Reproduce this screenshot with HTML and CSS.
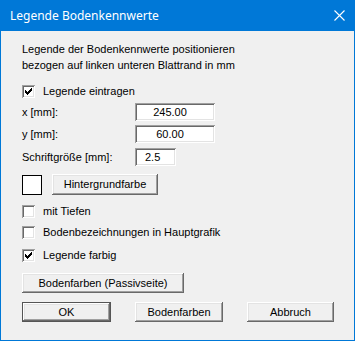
FILE: index.html
```html
<!DOCTYPE html>
<html>
<head>
<meta charset="utf-8">
<link rel="stylesheet" href="styles.css">
</head>
<body>
<div class="window">
  <div class="titlebar">
    <span class="title">Legende Bodenkennwerte</span>
    <svg class="close" width="11" height="11" viewBox="0 0 11 11"><path d="M0.5 0.5L10.5 10.5M10.5 0.5L0.5 10.5" stroke="#fff" stroke-width="1.1" fill="none"/></svg>
  </div>
  <div class="body">
    <p class="intro">Legende der Bodenkennwerte positionieren<br>bezogen auf linken unteren Blattrand in mm</p>

    <div class="check r-first"><span class="box"><svg width="13" height="13" viewBox="0 0 13 13" shape-rendering="crispEdges"><path d="M9 3h1v1h-1zM8 4h2v1h-2zM3 5h1v1h-1zM7 5h3v1h-3zM3 6h2v1h-2zM6 6h3v1h-3zM3 7h5v1h-5zM4 8h3v1h-3zM5 9h1v1h-1z" fill="#000"/></svg></span><span>Legende eintragen</span></div>

    <div class="field f-x"><span class="lbl">x [mm]:</span><span class="input wide">245.00</span></div>
    <div class="field f-y"><span class="lbl">y [mm]:</span><span class="input wide">60.00</span></div>
    <div class="field f-s"><span class="lbl">Schriftgröße [mm]:</span><span class="input narrow">2.5</span></div>

    <div class="color-row">
      <span class="swatch"></span>
      <span class="btn btn-bg">Hintergrundfarbe</span>
    </div>

    <div class="check r-tiefen"><span class="box"></span><span>mit Tiefen</span></div>
    <div class="check r-boden"><span class="box"></span><span>Bodenbezeichnungen in Hauptgrafik</span></div>
    <div class="check r-farbig"><span class="box"><svg width="13" height="13" viewBox="0 0 13 13" shape-rendering="crispEdges"><path d="M9 3h1v1h-1zM8 4h2v1h-2zM3 5h1v1h-1zM7 5h3v1h-3zM3 6h2v1h-2zM6 6h3v1h-3zM3 7h5v1h-5zM4 8h3v1h-3zM5 9h1v1h-1z" fill="#000"/></svg></span><span>Legende farbig</span></div>

    <div class="passiv-row"><span class="btn btn-passiv">Bodenfarben (Passivseite)</span></div>

    <div class="actions">
      <span class="btn btn-ok">OK</span>
      <span class="btn btn-farben">Bodenfarben</span>
      <span class="btn btn-abbruch">Abbruch</span>
    </div>
  </div>
</div>
</body>
</html>
```
FILE: styles.css
```css
html, body {
  margin: 0;
  padding: 0;
  background: #f0f0f0;
}
.window {
  width: 355px;
  height: 341px;
  display: flex;
  flex-direction: column;
  font-family: "Liberation Sans", Arial, sans-serif;
  font-size: 11px;
  color: #000;
}
.titlebar {
  height: 31px;
  flex: none;
  background: #0078d7;
  display: flex;
  align-items: center;
  justify-content: space-between;
  padding: 0 10px 0 10px;
  box-sizing: border-box;
}
.title {
  font-family: "Noto Sans", "Open Sans", sans-serif;
  font-size: 12px;
  line-height: 31px;
  color: #fff;
}
.close {
  display: block;
  margin-top: -1px;
}
.body {
  flex: 1;
  border: 1px solid #0078d7;
  border-top: none;
  background: #f0f0f0;
  padding-left: 21px;
  display: flex;
  flex-direction: column;
  align-items: flex-start;
}
.intro {
  margin: 10px 0 0 0;
  line-height: 16px;
}
.check {
  height: 17px;
  display: flex;
  align-items: center;
  line-height: 17px;
}
.box {
  width: 13px;
  height: 13px;
  flex: none;
  background: #fff;
  box-shadow: inset 1px 1px #a0a0a0, inset -1px -1px #fff, inset 2px 2px #696969, inset -2px -2px #e3e3e3;
  margin-right: 8px;
  display: block;
}
.box svg { display: block; }
.r-first { margin-top: 10px; }
.field {
  display: flex;
  align-items: center;
  height: 18px;
}
.f-x { margin-top: 3px; }
.f-y { margin-top: 4px; }
.f-s { margin-top: 5px; }
.lbl {
  width: 113px;
}
.input {
  height: 18px;
  line-height: 18px;
  background: #fff;
  box-shadow: inset 1px 1px #a0a0a0, inset -1px -1px #fff, inset 2px 2px #696969, inset -2px -2px #e3e3e3;
  box-sizing: border-box;
}
.wide {
  width: 80px;
  text-align: center;
  padding-right: 10px;
}
.narrow {
  width: 41px;
  padding-left: 10px;
}
.color-row {
  margin-top: 8px;
  display: flex;
  align-items: flex-start;
  height: 21px;
}
.swatch {
  width: 20px;
  height: 20px;
  box-sizing: border-box;
  border: 1px solid #000;
  background: #fff;
  margin-top: 1px;
  margin-right: 10px;
}
.btn {
  display: flex;
  align-items: center;
  justify-content: center;
  box-sizing: border-box;
  background: #f0f0f0;
  box-shadow: inset -1px -1px #696969, inset 1px 1px #fff, inset -2px -2px #a0a0a0, inset 2px 2px #e3e3e3;
  line-height: 1;
}
.btn-bg {
  width: 106px;
  height: 21px;
}
.r-tiefen { margin-top: 8px; }
.r-boden { margin-top: 4px; }
.r-farbig { margin-top: 6px; }
.passiv-row {
  margin-top: 9px;
}
.btn-passiv {
  width: 162px;
  height: 20px;
}
.actions {
  margin-top: 9px;
  display: flex;
  gap: 24px;
}
.actions .btn {
  height: 20px;
}
.btn-ok {
  width: 89px;
  border: 1px solid #555;
}
.btn-farben { width: 88px; }
.btn-abbruch { width: 87px; }
```
